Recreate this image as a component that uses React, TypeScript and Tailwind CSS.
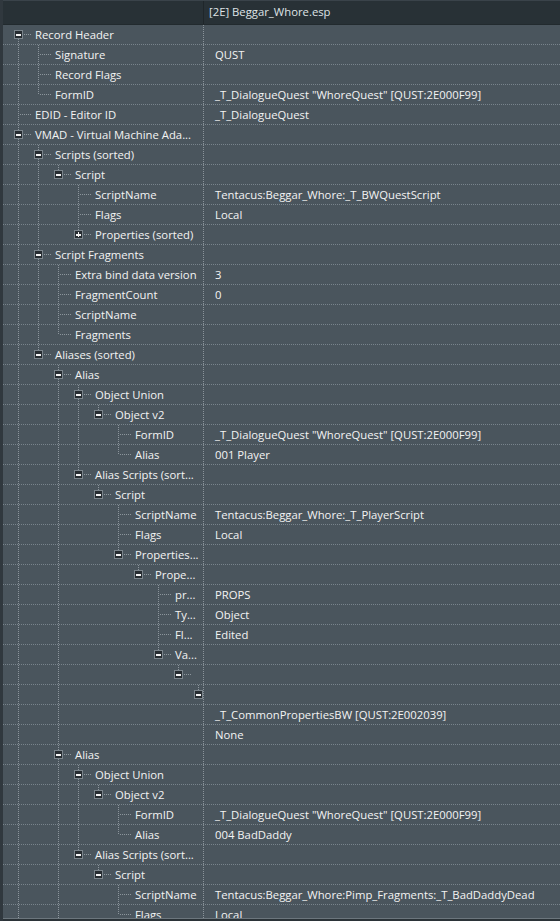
import React from 'react';

type Row = {
  level: number;
  label?: string;
  value?: string;
  box?: '-' | '+';
  more?: boolean; // has a later sibling that is scrolled out of view
};

const ROWS: Row[] = [
  {level: 0, label: 'Record Header', box: '-'},
  {level: 1, label: 'Signature', value: 'QUST'},
  {level: 1, label: 'Record Flags'},
  {level: 1, label: 'FormID', value: '_T_DialogueQuest "WhoreQuest" [QUST:2E000F99]'},
  {level: 0, label: 'EDID - Editor ID', value: '_T_DialogueQuest'},
  {level: 0, label: 'VMAD - Virtual Machine Ada...', box: '-', more: true},
  {level: 1, label: 'Scripts (sorted)', box: '-'},
  {level: 2, label: 'Script', box: '-'},
  {level: 3, label: 'ScriptName', value: 'Tentacus:Beggar_Whore:_T_BWQuestScript'},
  {level: 3, label: 'Flags', value: 'Local'},
  {level: 3, label: 'Properties (sorted)', box: '+'},
  {level: 1, label: 'Script Fragments', box: '-'},
  {level: 2, label: 'Extra bind data version', value: '3'},
  {level: 2, label: 'FragmentCount', value: '0'},
  {level: 2, label: 'ScriptName'},
  {level: 2, label: 'Fragments'},
  {level: 1, label: 'Aliases (sorted)', box: '-'},
  {level: 2, label: 'Alias', box: '-'},
  {level: 3, label: 'Object Union', box: '-'},
  {level: 4, label: 'Object v2', box: '-'},
  {level: 5, label: 'FormID', value: '_T_DialogueQuest "WhoreQuest" [QUST:2E000F99]'},
  {level: 5, label: 'Alias', value: '001 Player'},
  {level: 3, label: 'Alias Scripts (sort...', box: '-'},
  {level: 4, label: 'Script', box: '-'},
  {level: 5, label: 'ScriptName', value: 'Tentacus:Beggar_Whore:_T_PlayerScript'},
  {level: 5, label: 'Flags', value: 'Local'},
  {level: 5, label: 'Properties...', box: '-'},
  {level: 6, label: 'Prope...', box: '-'},
  {level: 7, label: 'pr...', value: 'PROPS'},
  {level: 7, label: 'Ty...', value: 'Object'},
  {level: 7, label: 'Fl...', value: 'Edited'},
  {level: 7, label: 'Va...', box: '-'},
  {level: 8, box: '-'},
  {level: 9, box: '-'},
  {level: 10, value: '_T_CommonPropertiesBW [QUST:2E002039]'},
  {level: 10, value: 'None'},
  {level: 2, label: 'Alias', box: '-', more: true},
  {level: 3, label: 'Object Union', box: '-'},
  {level: 4, label: 'Object v2', box: '-'},
  {level: 5, label: 'FormID', value: '_T_DialogueQuest "WhoreQuest" [QUST:2E000F99]'},
  {level: 5, label: 'Alias', value: '004 BadDaddy'},
  {level: 3, label: 'Alias Scripts (sort...', box: '-'},
  {level: 4, label: 'Script', box: '-'},
  {level: 5, label: 'ScriptName', value: 'Tentacus:Beggar_Whore:Pimp_Fragments:_T_BadDaddyDead'},
  {level: 5, label: 'Flags', value: 'Local'},
];

const LINE = '#8c959c';

const hasNext = ROWS.map((row, i) => {
  if (row.more) return true;
  for (let j = i + 1; j < ROWS.length; j++) {
    if (ROWS[j].level < row.level) return false;
    if (ROWS[j].level === row.level) return true;
  }
  return false;
});

// for each row, which ancestor columns keep a vertical line running through it
const ancestorLines = ROWS.map((row, i) => {
  const cols: boolean[] = [];
  for (let c = 0; c < row.level; c++) {
    let k = i - 1;
    while (k >= 0 && ROWS[k].level !== c) k--;
    cols.push(k >= 0 && hasNext[k]);
  }
  return cols;
});

function TreeLines({row, index}: {row: Row; index: number}) {
  const L = row.level;
  const cx = 15.5 + 20 * L;
  const w = 32 + 20 * L;
  const top = index === 0 ? 9 : 0;
  return (
    <svg width={w} height={19} className="shrink-0" shapeRendering="crispEdges">
      <g stroke={LINE} strokeWidth={1} strokeDasharray="1 1" fill="none">
        {ancestorLines[index].map((on, c) =>
          on ? <line key={c} x1={15.5 + 20 * c} y1={0} x2={15.5 + 20 * c} y2={19}/> : null,
        )}
        <line x1={cx} y1={top} x2={cx} y2={row.box ? 5 : 9.5}/>
        {hasNext[index] && <line x1={cx} y1={row.box ? 14 : 9.5} x2={cx} y2={19}/>}
        <line x1={row.box ? cx + 5 : cx + 1} y1={9.5} x2={29 + 20 * L} y2={9.5}/>
      </g>
      {row.box && (
        <g>
          <rect x={cx - 4} y={5.5} width={8} height={8} fill="#262c31" stroke="#7b858c"/>
          <rect x={cx - 2.5} y={9} width={5} height={1.5} fill="#f5f5f5"/>
          {row.box === '+' && <rect x={cx - 0.75} y={7} width={1.5} height={5} fill="#f5f5f5"/>}
        </g>
      )}
    </svg>
  );
}

export default function App() {
  return (
    <div
      className="w-[560px] h-[921px] overflow-hidden bg-[#4a555d] border-l-[3px] border-[#30383e] flex flex-col text-[11.3px] text-[#f3f3f3]"
      style={{fontFamily: '"Open Sans", "Noto Sans", sans-serif'}}
    >
      <div className="h-[25px] shrink-0 flex bg-[#283136] border-t border-t-[#3a434a] border-b border-b-[#222a2e]">
        <div className="w-[201px] shrink-0 border-r border-[#1f262a]"/>
        <div className="flex-1 flex items-center pl-[5px] text-[#dfe3e6]">[2E] Beggar_Whore.esp</div>
      </div>

      <div className="flex-1 overflow-hidden">
        {ROWS.map((row, i) => (
          <div key={i} className="h-[20px] flex border-b border-dotted border-[#78838b]">
            <div className="w-[201px] shrink-0 flex items-center overflow-hidden border-r border-dotted border-[#8a939a]">
              <TreeLines row={row} index={i}/>
              {row.label && <span className="whitespace-nowrap leading-[19px]">{row.label}</span>}
            </div>
            <div className="flex-1 pl-[11px] whitespace-nowrap leading-[19px] overflow-hidden">
              {row.value}
            </div>
          </div>
        ))}
      </div>

      <div className="h-[3px] shrink-0 bg-[#2b3338] border-t border-[#6c767d]"/>
    </div>
  );
}
